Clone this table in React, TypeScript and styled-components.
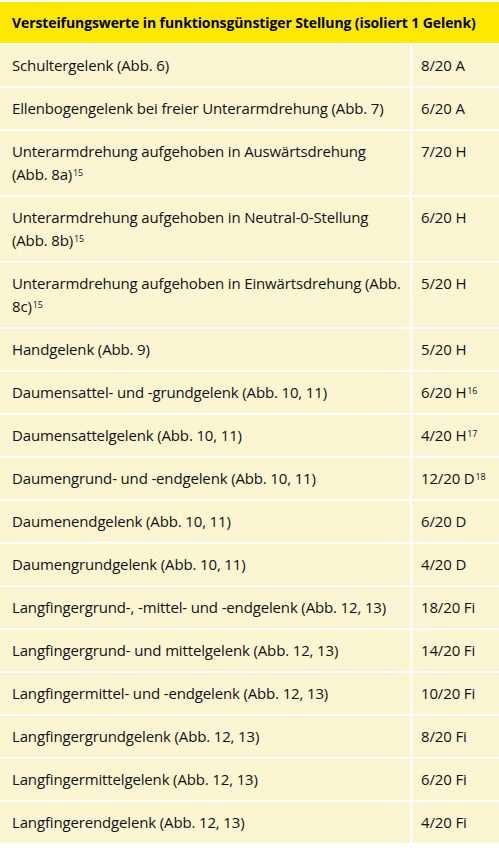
import React from "react";
import styled, { createGlobalStyle } from "styled-components";

const Global = createGlobalStyle`
  html, body { margin: 0; padding: 0; background: #ffffff; }
  body { font-family: "Open Sans", "Noto Sans", sans-serif; color: #111111; }
`;

const Page = styled.div`
  padding-top: 2px;
`;

const Table = styled.div`
  display: grid;
  grid-template-columns: 410px 1fr;
  column-gap: 2px;
  row-gap: 2px;
  background: #ffffff;
`;

const Header = styled.div`
  grid-column: 1 / -1;
  background: #ffe800;
  height: 41px;
  display: flex;
  align-items: center;
  padding: 0 12px;
  font-weight: 700;
  font-size: 14px;
  letter-spacing: -0.1px;
  color: #000000;
`;

const Cell = styled.div<{ $value?: boolean }>`
  background: #fcf5d2;
  padding: ${(p) => (p.$value ? "9px 6px 9px 9px" : "9px 7px 9px 12px")};
  font-size: 15px;
  line-height: 23px;
  letter-spacing: -0.15px;
  white-space: ${(p) => (p.$value ? "nowrap" : "normal")};
`;

const Sup = styled.span`
  position: relative;
  top: -4px;
  font-size: 9px;
  line-height: 0;
  margin-left: 1px;
`;

type Row = { label: string; labelSup?: string; value: string; valueSup?: string };

const rows: Row[] = [
  { label: "Schultergelenk (Abb. 6)", value: "8/20 A" },
  { label: "Ellenbogengelenk bei freier Unterarmdrehung (Abb. 7)", value: "6/20 A" },
  { label: "Unterarmdrehung aufgehoben in Auswärtsdrehung (Abb. 8a)", labelSup: "15", value: "7/20 H" },
  { label: "Unterarmdrehung aufgehoben in Neutral-0-Stellung (Abb. 8b)", labelSup: "15", value: "6/20 H" },
  { label: "Unterarmdrehung aufgehoben in Einwärtsdrehung (Abb. 8c)", labelSup: "15", value: "5/20 H" },
  { label: "Handgelenk (Abb. 9)", value: "5/20 H" },
  { label: "Daumensattel- und -grundgelenk (Abb. 10, 11)", value: "6/20 H", valueSup: "16" },
  { label: "Daumensattelgelenk (Abb. 10, 11)", value: "4/20 H", valueSup: "17" },
  { label: "Daumengrund- und -endgelenk (Abb. 10, 11)", value: "12/20 D", valueSup: "18" },
  { label: "Daumenendgelenk (Abb. 10, 11)", value: "6/20 D" },
  { label: "Daumengrundgelenk (Abb. 10, 11)", value: "4/20 D" },
  { label: "Langfingergrund-, -mittel- und -endgelenk (Abb. 12, 13)", value: "18/20 Fi" },
  { label: "Langfingergrund- und mittelgelenk (Abb. 12, 13)", value: "14/20 Fi" },
  { label: "Langfingermittel- und -endgelenk (Abb. 12, 13)", value: "10/20 Fi" },
  { label: "Langfingergrundgelenk (Abb. 12, 13)", value: "8/20 Fi" },
  { label: "Langfingermittelgelenk (Abb. 12, 13)", value: "6/20 Fi" },
  { label: "Langfingerendgelenk (Abb. 12, 13)", value: "4/20 Fi" },
];

export default function App() {
  return (
    <Page>
      <Global />
      <Table>
        <Header>Versteifungswerte in funktionsgünstiger Stellung (isoliert 1 Gelenk)</Header>
        {rows.map((r, i) => (
          <React.Fragment key={i}>
            <Cell>
              {r.label}
              {r.labelSup && <Sup>{r.labelSup}</Sup>}
            </Cell>
            <Cell $value>
              {r.value}
              {r.valueSup && <Sup>{r.valueSup}</Sup>}
            </Cell>
          </React.Fragment>
        ))}
      </Table>
    </Page>
  );
}
